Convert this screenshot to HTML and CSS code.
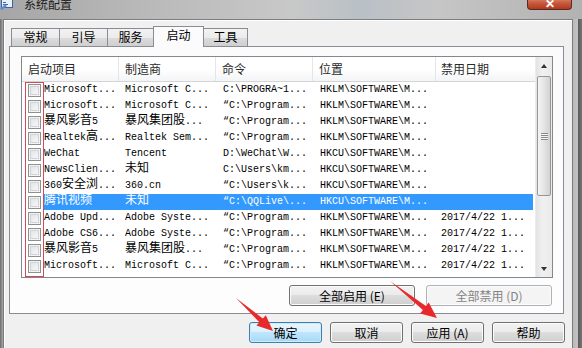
FILE: index.html
```html
<!DOCTYPE html>
<html lang="zh-CN">
<head>
    <meta charset="UTF-8">
    <title>系统配置</title>
    <link rel="stylesheet" href="styles.css">
</head>
<body>
    <div class="screen">
        <div class="titlebar">
            <svg class="app-icon" width="14" height="13" viewBox="0 0 14 13">
                <rect x="1.5" y="0.5" width="11" height="10" fill="#e9f1fb" stroke="#3a64a8"/>
                <rect x="2" y="1" width="10" height="2" fill="#4f86d0"/>
                <rect x="3" y="5" width="3" height="1" fill="#3a64a8"/>
                <rect x="3" y="7" width="5" height="1" fill="#3a64a8"/>
                <path d="M0 12 L5 7 L7 9 L2 13 Z" fill="#5c8fd6"/>
            </svg>
            <span class="title">系统配置</span>
            <div class="close-btn"><span>✕</span></div>
        </div>

        <div class="window">
            <div class="frame-left"></div>
            <div class="client">
                <div class="tabs">
                    <div class="tab t1">常规</div>
                    <div class="tab t2">引导</div>
                    <div class="tab t3">服务</div>
                    <div class="tab active">启动</div>
                    <div class="tab t5">工具</div>
                </div>

                <div class="panel">
                    <div class="listview">
                        <div class="list-body">
                            <div class="list-head">
                                <div class="hcell">启动项目</div>
                                <div class="hcell">制造商</div>
                                <div class="hcell">命令</div>
                                <div class="hcell">位置</div>
                                <div class="hcell">禁用日期</div>
                            </div>

                            <div class="row">
                                <div class="cell first"><i class="check"></i><span class="name">Microsoft...</span></div>
                                <div class="cell">Microsoft C...</div>
                                <div class="cell">C:\PROGRA~1...</div>
                                <div class="cell">HKLM\SOFTWARE\M...</div>
                                <div class="cell"></div>
                            </div>
                            <div class="row">
                                <div class="cell first"><i class="check"></i><span class="name">Microsoft...</span></div>
                                <div class="cell">Microsoft C...</div>
                                <div class="cell">“C:\Program...</div>
                                <div class="cell">HKLM\SOFTWARE\M...</div>
                                <div class="cell"></div>
                            </div>
                            <div class="row">
                                <div class="cell first"><i class="check"></i><span class="name"><span class="zh">暴风影音</span>5</span></div>
                                <div class="cell"><span class="zh">暴风集团股</span>...</div>
                                <div class="cell">“C:\Program...</div>
                                <div class="cell">HKLM\SOFTWARE\M...</div>
                                <div class="cell"></div>
                            </div>
                            <div class="row">
                                <div class="cell first"><i class="check"></i><span class="name">Realtek<span class="zh">高</span>...</span></div>
                                <div class="cell">Realtek Sem...</div>
                                <div class="cell">“C:\Program...</div>
                                <div class="cell">HKLM\SOFTWARE\M...</div>
                                <div class="cell"></div>
                            </div>
                            <div class="row">
                                <div class="cell first"><i class="check"></i><span class="name">WeChat</span></div>
                                <div class="cell">Tencent</div>
                                <div class="cell">D:\WeChat\W...</div>
                                <div class="cell">HKCU\SOFTWARE\M...</div>
                                <div class="cell"></div>
                            </div>
                            <div class="row">
                                <div class="cell first"><i class="check"></i><span class="name">NewsClien...</span></div>
                                <div class="cell"><span class="zh">未知</span></div>
                                <div class="cell">C:\Users\km...</div>
                                <div class="cell">HKCU\SOFTWARE\M...</div>
                                <div class="cell"></div>
                            </div>
                            <div class="row">
                                <div class="cell first"><i class="check"></i><span class="name">360<span class="zh">安全浏</span>...</span></div>
                                <div class="cell">360.cn</div>
                                <div class="cell">“C:\Users\k...</div>
                                <div class="cell">HKCU\SOFTWARE\M...</div>
                                <div class="cell"></div>
                            </div>
                            <div class="row sel">
                                <div class="cell first"><i class="check"></i><span class="name"><span class="zh">腾讯视频</span></span></div>
                                <div class="cell"><span class="zh">未知</span></div>
                                <div class="cell">“C:\QQLive\...</div>
                                <div class="cell">HKCU\SOFTWARE\M...</div>
                                <div class="cell"></div>
                            </div>
                            <div class="row">
                                <div class="cell first"><i class="check"></i><span class="name">Adobe Upd...</span></div>
                                <div class="cell">Adobe Syste...</div>
                                <div class="cell">“C:\Program...</div>
                                <div class="cell">HKLM\SOFTWARE\M...</div>
                                <div class="cell">2017/4/22 1...</div>
                            </div>
                            <div class="row">
                                <div class="cell first"><i class="check"></i><span class="name">Adobe CS6...</span></div>
                                <div class="cell">Adobe Syste...</div>
                                <div class="cell">“C:\Program...</div>
                                <div class="cell">HKLM\SOFTWARE\M...</div>
                                <div class="cell">2017/4/22 1...</div>
                            </div>
                            <div class="row">
                                <div class="cell first"><i class="check"></i><span class="name"><span class="zh">暴风影音</span>5</span></div>
                                <div class="cell"><span class="zh">暴风集团股</span>...</div>
                                <div class="cell">“C:\Program...</div>
                                <div class="cell">HKLM\SOFTWARE\M...</div>
                                <div class="cell">2017/4/22 1...</div>
                            </div>
                            <div class="row">
                                <div class="cell first"><i class="check"></i><span class="name">Microsoft...</span></div>
                                <div class="cell">Microsoft C...</div>
                                <div class="cell">“C:\Program...</div>
                                <div class="cell">HKLM\SOFTWARE\M...</div>
                                <div class="cell">2017/4/22 1...</div>
                            </div>
                        </div>

                        <div class="scrollbar">
                            <div class="sb-btn"><span class="arrow-up"></span></div>
                            <div class="sb-track">
                                <div class="sb-thumb"><span class="grip"></span></div>
                            </div>
                            <div class="sb-btn"><span class="arrow-down"></span></div>
                        </div>
                    </div>

                    <div class="panel-buttons">
                        <button class="btn wide">全部启用 (E)</button>
                        <button class="btn wide" disabled>全部禁用 (D)</button>
                    </div>
                </div>

                <div class="dialog-buttons">
                    <button class="btn default">确定</button>
                    <button class="btn">取消</button>
                    <button class="btn">应用 (A)</button>
                    <button class="btn">帮助</button>
                </div>
            </div>
            <div class="frame-right"></div>
        </div>

        <!-- red marks drawn over the screenshot -->
        <svg class="marks" width="582" height="348" viewBox="0 0 582 348">
            <rect x="25.5" y="82.5" width="18" height="194" fill="none" stroke="#cf4a55" stroke-width="1"/>
            <polygon points="236,298 262.8,318.5 265.8,315.2 273,331 256.4,325.6 259.4,322.3" fill="#e8292b"/>
            <polygon points="390,281 425.9,306.1 428.7,302.6 437,318 420.1,313.6 422.9,310.1" fill="#e8292b"/>
        </svg>
    </div>
</body>
</html>
```

FILE: styles.css
```css
* {
    margin: 0;
    padding: 0;
    box-sizing: border-box;
}
body {
    width: 582px;
    height: 348px;
    overflow: hidden;
    font-family: "Noto Sans CJK SC", "Noto Sans", sans-serif;
    font-size: 12px;
    color: #000;
}
.screen {
    position: relative;
    width: 582px;
    height: 348px;
    display: flex;
    flex-direction: column;
    background: #9a9a9a;
}

/* title bar (glass) */
.titlebar {
    height: 19px;
    display: flex;
    align-items: flex-start;
    background: linear-gradient(90deg, #a6a6a6 0%, #b9b9b9 25%, #c8c8c8 50%, #b9c0c6 62%, #c6c6c6 75%, #b2b2b2 100%);
    overflow: hidden;
}
.app-icon {
    margin-top: -3px;
    flex: none;
}
.title {
    margin-left: 10px;
    margin-top: -4px;
    line-height: 16px;
    font-size: 12px;
    color: #1b1b1b;
}
.close-btn {
    margin-left: auto;
    margin-right: 10px;
    width: 45px;
    height: 11px;
    margin-top: -1px;
    border: 1px solid #5a2a22;
    border-top: none;
    border-radius: 0 0 4px 4px;
    background: linear-gradient(180deg, #d98066 0%, #c75a3e 40%, #b2381e 100%);
    color: #fff;
    text-align: center;
    font-size: 12px;
    line-height: 8px;
    font-weight: bold;
    overflow: hidden;
}

/* window body */
.window {
    flex: 1;
    display: flex;
}
.frame-left {
    width: 3px;
    background: linear-gradient(90deg, #6c6c6c, #a8a8a8);
}
.frame-right {
    width: 9px;
    background: linear-gradient(90deg, #b9b9b9 0%, #c2c2c2 50%, #5b5b5b 60%, #777 100%);
}
.client {
    flex: 1;
    background: #f0f0f0;
    border: 1px solid #7d7d7d;
    border-bottom: none;
    box-shadow: inset 1px 1px 0 #fff;
    padding: 6px 8px 0 5px;
}

/* tabs */
.tabs {
    display: flex;
    align-items: flex-end;
    height: 21px;
    margin-left: 2px;
    margin-bottom: -1px;
    position: relative;
    z-index: 1;
}
.tab {
    height: 18px;
    margin-bottom: 1px;
    border: 1px solid #898c95;
    border-bottom: none;
    border-right: none;
    background: linear-gradient(180deg, #f2f2f2 0%, #ebebeb 50%, #dcdcdc 51%, #cfcfcf 100%);
    text-align: center;
    line-height: 16px;
    font-size: 12px;
}
.t1 { width: 48px; }
.t2 { width: 48px; }
.t3 { width: 46px; }
.t5 { width: 45px; border-right: 1px solid #898c95; }
.tab.active {
    width: 51px;
    height: 21px;
    margin-bottom: 0;
    border-right: 1px solid #898c95;
    background: #fbfbfb;
    line-height: 16px;
    margin-right: -1px;
}

/* tab panel */
.panel {
    border: 1px solid #898c95;
    background: linear-gradient(180deg, #fbfbfb, #fdfdfd);
    padding: 9px 10px 7px 11px;
}
.listview {
    width: 532px;
    height: 222px;
    border: 1px solid #828790;
    background: #fff;
    display: flex;
}
.list-body {
    flex: 1;
    overflow: hidden;
}
.list-head,
.row {
    display: grid;
    grid-template-columns: 97px 97px 97px 123px 99px;
}
.list-head {
    height: 25px;
    background: linear-gradient(180deg, #ffffff 0%, #ffffff 50%, #f3f4f6 100%);
    border-bottom: 1px solid #d5d5d5;
}
.hcell {
    padding-left: 6px;
    line-height: 24px;
    font-size: 12px;
    color: #2a2a2a;
    border-right: 1px solid #e3e5e8;
}
.hcell:last-child {
    border-right: none;
    padding-left: 5px;
}
.row {
    height: 16px;
}
.cell {
    height: 16px;
    font: 10px/16px "Liberation Mono", "DejaVu Sans Mono", monospace;
    white-space: nowrap;
    padding-left: 7px;
}
.cell:nth-child(2) { padding-left: 6px; }
.cell:last-child { padding-left: 5px; margin-right: 2px; }
.zh {
    font-family: "Noto Sans CJK SC", sans-serif;
    font-size: 12px;
    line-height: 10px;
}
.cell.first {
    display: flex;
    align-items: center;
    padding-left: 6px;
}
.name {
    flex: 1;
    height: 16px;
    line-height: 16px;
    margin-left: 2px;
    padding-left: 1px;
}
.check {
    flex: none;
    width: 13px;
    height: 13px;
    border: 1px solid #8e8f8f;
    background: linear-gradient(135deg, #dcdfe3 0%, #f4f4f4 70%, #fbfbfb 100%);
    box-shadow: inset 0 0 0 1px #f4f4f4, inset 0 0 0 2px #cfd2d6;
}
.row.sel .name,
.row.sel .cell:not(.first) {
    background: #3399ff;
    color: #fff;
}

/* scrollbar */
.scrollbar {
    width: 17px;
    display: flex;
    flex-direction: column;
    background: linear-gradient(90deg, #e3e3e3, #f0f0f0 40%, #eaeaea);
    border-left: 1px solid #ececec;
}
.sb-btn {
    height: 17px;
    display: flex;
    align-items: center;
    justify-content: center;
}
.arrow-up {
    border: 3px solid transparent;
    border-top: none;
    border-bottom: 4px solid #333;
}
.arrow-down {
    border: 3px solid transparent;
    border-bottom: none;
    border-top: 4px solid #333;
}
.sb-track {
    flex: 1;
    padding-top: 2px;
}
.sb-thumb {
    height: 120px;
    margin: 0 1px;
    border: 1px solid #979797;
    border-radius: 2px;
    background: linear-gradient(90deg, #f4f4f4, #e4e4e4 50%, #d2d2d2);
    display: flex;
    align-items: center;
    justify-content: center;
}
.grip {
    width: 7px;
    height: 7px;
    background: repeating-linear-gradient(180deg, #8a8a8a 0 1px, #f4f4f4 1px 2px);
}

/* buttons */
.panel-buttons {
    display: flex;
    justify-content: flex-end;
    gap: 11px;
    margin-top: 7px;
    padding-right: 1px;
}
.dialog-buttons {
    display: flex;
    justify-content: flex-end;
    gap: 8px;
    margin-top: 8px;
    margin-right: -1px;
}
.btn {
    width: 73px;
    height: 21px;
    border: 1px solid #707070;
    border-radius: 3px;
    background: linear-gradient(180deg, #f2f2f2 0%, #ebebeb 48%, #dddddd 50%, #cfcfcf 100%);
    box-shadow: inset 0 0 0 1px #fcfcfc;
    font-family: "Noto Sans CJK SC", sans-serif;
    font-size: 12px;
    line-height: 17px;
    color: #000;
}
.btn.wide {
    width: 126px;
}
.btn:disabled {
    border-color: #adb2b5;
    background: #f4f4f4;
    color: #838383;
}
.btn.default {
    border-color: #3c7fb1;
    background: linear-gradient(180deg, #eaf6fd 0%, #d9f0fc 48%, #bee6fd 50%, #a7d9f5 100%);
    box-shadow: inset 0 0 0 1px #cfeafb;
}

/* annotation layer */
.marks {
    position: absolute;
    left: 0;
    top: 0;
    pointer-events: none;
}
```
